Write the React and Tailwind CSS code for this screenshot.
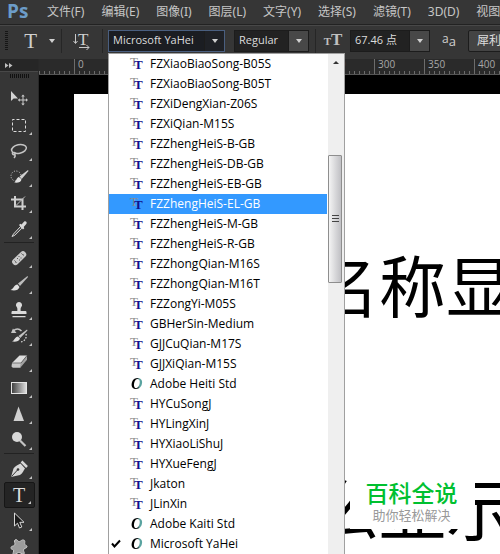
import React, { useState } from 'react';

const menus = ['文件(F)', '编辑(E)', '图像(I)', '图层(L)', '文字(Y)', '选择(S)', '滤镜(T)', '3D(D)', '视图(V)'];

const fonts = [
  { name: 'FZXiaoBiaoSong-B05S', type: 'tt' },
  { name: 'FZXiaoBiaoSong-B05T', type: 'tt' },
  { name: 'FZXiDengXian-Z06S', type: 'tt' },
  { name: 'FZXiQian-M15S', type: 'tt' },
  { name: 'FZZhengHeiS-B-GB', type: 'tt' },
  { name: 'FZZhengHeiS-DB-GB', type: 'tt' },
  { name: 'FZZhengHeiS-EB-GB', type: 'tt' },
  { name: 'FZZhengHeiS-EL-GB', type: 'tt' },
  { name: 'FZZhengHeiS-M-GB', type: 'tt' },
  { name: 'FZZhengHeiS-R-GB', type: 'tt' },
  { name: 'FZZhongQian-M16S', type: 'tt' },
  { name: 'FZZhongQian-M16T', type: 'tt' },
  { name: 'FZZongYi-M05S', type: 'tt' },
  { name: 'GBHerSin-Medium', type: 'tt' },
  { name: 'GJJCuQian-M17S', type: 'tt' },
  { name: 'GJJXiQian-M15S', type: 'tt' },
  { name: 'Adobe Heiti Std', type: 'ot' },
  { name: 'HYCuSongJ', type: 'tt' },
  { name: 'HYLingXinJ', type: 'tt' },
  { name: 'HYXiaoLiShuJ', type: 'tt' },
  { name: 'HYXueFengJ', type: 'tt' },
  { name: 'Jkaton', type: 'tt' },
  { name: 'JLinXin', type: 'tt' },
  { name: 'Adobe Kaiti Std', type: 'ot' },
  { name: 'Microsoft YaHei', type: 'ot' },
];

const toolGroups = [
  [
    {
      name: 'Move',
      single: true,
      icon: (
        <>
          <path d="M1 1v10l2.600-2.400H8z" fill="#d2d2d2" />
          <path d="M13 6v8M9 10h8" stroke="#c8c8c8" />
          <path d="M13 4.500l-1.800 2h3.600zM13 15.500l-1.800-2h3.600zM7.800 10l2-1.800v3.600zM18 10l-2-1.800v3.600z" fill="#c8c8c8" />
        </>
      ),
    },
    {
      name: 'Marquee',
      icon: <rect x="2.500" y="3.500" width="13" height="12" fill="none" stroke="#dcdcdc" strokeDasharray="3 2" strokeDashoffset="1" />,
    },
    {
      name: 'Lasso',
      icon: (
        <g fill="none" stroke="#c4c4c4" strokeWidth="1.500">
          <ellipse cx="9" cy="7" rx="7.500" ry="4.300" transform="rotate(-12 9 7)" />
          <path d="M3 10c-1.500 1.500 0 3 1.500 2.500s.5-2.500-1-2M4.500 12.500c1 1 .5 2.500-.5 3.500" />
        </g>
      ),
    },
    {
      name: 'Quick Selection',
      icon: (
        <>
          <circle cx="6" cy="8" r="5" fill="none" stroke="#d8d8d8" strokeDasharray="1 1.600" />
          <path d="M18 2l-8.500 6.500 2.200 2.400L18.500 3z" fill="#d0d0d0" />
          <path d="M9 9l2.500 2.500c-.5 3-4 3.500-7.500 3 2-.5 2.500-5 5-5.500z" fill="#e0e0e0" />
        </>
      ),
    },
    {
      name: 'Crop',
      icon: (
        <>
          <path d="M5 2v10.500h11M1 5.500h11.500V16" fill="none" stroke="#d0d0d0" strokeWidth="2" />
          <path d="M5.500 12L15 2.500" stroke="#bdbdbd" />
        </>
      ),
    },
    {
      name: 'Eyedropper',
      icon: (
        <>
          <path d="M10.500 6.500l-7 7.500-1.500 2.500 2.800-1.200 7.200-7.200z" fill="#4a4a4a" stroke="#d4d4d4" />
          <path d="M9 5l1.300-1.200 1.200.8L14 1.800c1.500-1.300 3.600.6 2.300 2.200L13.700 7l.6 1.200L13 9.500z" fill="#d8d8d8" />
        </>
      ),
    },
  ],
  [
    {
      name: 'Healing Brush',
      icon: (
        <>
          <rect x="0.500" y="6" width="17" height="6.500" rx="3.200" fill="#c9c9c9" transform="rotate(-44 9 9)" />
          <path d="M4 11l3 3M11 4l3 3" stroke="#8a8a8a" />
          <path d="M8.500 7.500h1M10.500 9h1M7 9.500h1M9 11h1M12.500 5.500h1M5 13h1" stroke="#555" />
        </>
      ),
    },
    {
      name: 'Brush',
      icon: (
        <>
          <path d="M17.500 1L8 8.500l2 2.500 8-9z" fill="#bdbdbd" />
          <path d="M7.500 9.500l2 2.500c-1 3.500-5 4-9 3 3-.7 3.500-5.500 7-5.500z" fill="#e0e0e0" />
        </>
      ),
    },
    {
      name: 'Clone Stamp',
      icon: (
        <path d="M9 1a3 3 0 0 1 2.300 5c-.8 1-.8 2.500-.6 4H15c1 0 1.500.5 1.500 1.300V13h-15v-1.700c0-.8.500-1.300 1.500-1.300h4.300c.2-1.500.2-3-.6-4A3 3 0 0 1 9 1zM2.500 15h13v1.300h-13z" fill="#dadada" />
      ),
    },
    {
      name: 'History Brush',
      icon: (
        <>
          <path d="M3 4c3-2.500 6-2.500 8.500 0" fill="none" stroke="#c4c4c4" strokeWidth="1.500" />
          <path d="M1 6l2-4.500L6.500 6z" fill="#c4c4c4" />
          <path d="M17 2.500L8.500 9l1.800 2L17.500 3.500z" fill="#c4c4c4" />
          <path d="M8 9.500l2 2c-.8 3-4.500 3.500-8 3 2.500-.7 3-5 6-5z" fill="#dedede" />
          <path d="M16 7c.8 4-1 7-5 8" fill="none" stroke="#dedede" strokeWidth="1.300" strokeDasharray="1.500 1.500" />
        </>
      ),
    },
    {
      name: 'Eraser',
      icon: (
        <>
          <path d="M2 10l7.500-7.500H17L11 10z" fill="#dedede" />
          <path d="M11 10l6-7.500v4.300L10.500 14.500z" fill="#a0a0a0" />
          <path d="M2 10h9l-.5 4.700H2.800L1.500 13.500z" fill="#c8c8c8" />
          <path d="M2 10h9l6-7.500" fill="none" stroke="#555" strokeWidth=".7" />
        </>
      ),
    },
    {
      name: 'Gradient',
      icon: (
        <>
          <defs>
            <linearGradient id="toolGradient">
              <stop offset="0" stopColor="#3c3c3c" />
              <stop offset="1" stopColor="#e0e0e0" />
            </linearGradient>
          </defs>
          <rect x="1.500" y="3.500" width="15" height="11" fill="url(#toolGradient)" stroke="#e4e4e4" />
        </>
      ),
    },
    { name: 'Sharpen', icon: <path d="M8.500 1.500L3.500 16h10.500z" fill="#d0d0d0" /> },
    {
      name: 'Dodge',
      icon: (
        <>
          <circle cx="7" cy="6" r="5" fill="#d8d8d8" />
          <path d="M10 9.500l5.500 5.500" stroke="#c4c4c4" strokeWidth="2.200" />
        </>
      ),
    },
  ],
  [
    {
      name: 'Pen',
      icon: (
        <>
          <path d="M1 17l2.500-8.500C5.500 5.500 8 5 10.500 3.500l4.500 5c-1.500 2-2 4.500-5 6.500z" fill="#d6d6d6" />
          <path d="M1.500 16.500l6-6.500" stroke="#333" />
          <circle cx="8" cy="9.500" r="1.300" fill="#333" />
          <path d="M11.500 1.500l5.500 5.500" stroke="#d6d6d6" strokeWidth="2.500" />
        </>
      ),
    },
    { name: 'Type', letter: 'T' },
    {
      name: 'Path Selection',
      icon: <path d="M4.500 1v13l3-2.800 2 4.800 2.300-1-2-4.700H14z" fill="#1c1c1c" stroke="#d8d8d8" />,
    },
    {
      name: 'Custom Shape',
      icon: (
        <path d="M8 3c2 2 3-1.500 5.500-1S14 5 15 6.500s2.500 1 2 2.500-3.500 1-3.500 3 2 3.500 0 4-3-2-5-1.500S5 17.500 3.500 16.500s1-3.500 0-4.500-3-.5-2.500-2.500 3-1 3.800-2.500S3.500 3 5 2s2 0 3 1z" fill="#9c9c9c" stroke="#c8c8c8" />
      ),
    },
  ],
];

const Caret = () => (
  <svg width="6" height="4" viewBox="0 0 6 4" aria-hidden="true">
    <path d="M0 0h6L3 4z" fill="#d0d0d0" />
  </svg>
);

const Separator = () => <span className="h-6 w-px shrink-0 bg-[#262626]" />;

const ComboBox = ({ label, value, width, active, children }) => {
  const [text, setText] = useState(value);

  return (
    <div className={`relative flex h-[22px] shrink-0 border ${width} ${active ? 'border-[#4a5f80] bg-[#1b1d22]' : 'border-[#1c1c1c] bg-[#222]'}`}>
      <input
        type="text"
        aria-label={label}
        value={text}
        onChange={(e) => setText(e.target.value)}
        className="w-0 min-w-0 flex-1 bg-transparent pl-1 font-['Open_Sans','Noto_Sans_CJK_SC',sans-serif] text-[11px] text-[#dcdcdc] outline-none"
      />
      <button
        type="button"
        aria-label={`${label} options`}
        className={`flex w-5 items-center justify-center border-l border-[#1c1c1c] ${active ? 'bg-[#1f2126]' : 'bg-[#484848]'}`}
      >
        <Caret />
      </button>
      {children}
    </div>
  );
};

const FontIcon = ({ type }) =>
  type === 'tt' ? (
    <span aria-hidden="true" className="relative h-4 w-4 shrink-0 font-['Liberation_Serif',serif] text-[13px] leading-3 font-bold">
      <span className="absolute top-0 left-0 font-normal text-[#8c8c8c]">T</span>
      <span className="absolute top-[3px] left-1 text-[#10108c]">T</span>
    </span>
  ) : (
    <span aria-hidden="true" className="h-4 w-4 shrink-0 bg-linear-to-r from-black from-40% to-[#5aa3a0] to-60% bg-clip-text pl-px font-['Liberation_Serif',serif] text-[16px] leading-4 font-bold text-transparent italic">
      O
    </span>
  );

const FontMenu = () => {
  const [hovered, setHovered] = useState('FZZhengHeiS-EL-GB');
  const selected = 'Microsoft YaHei';

  return (
    <div className="absolute top-full -left-px z-10 mt-[2px] flex w-[237px] border border-[#a0a0a0] bg-white">
      <ul role="listbox" aria-label="Fonts" className="flex-1 pr-px">
        {fonts.map((font) => (
          <li
            key={font.name}
            role="option"
            aria-selected={font.name === selected}
            onMouseEnter={() => setHovered(font.name)}
            className={`flex h-5 items-center font-['Open_Sans',sans-serif] text-[12px] whitespace-nowrap ${font.name === hovered ? 'bg-[#3399ff] text-white' : 'text-black'}`}
          >
            <span className="flex w-[21px] shrink-0 pl-[2px]">
              {font.name === selected && (
                <svg width="10" height="9" viewBox="0 0 10 9" aria-hidden="true">
                  <path d="M1 4.500l2.500 3L9 1.500" fill="none" stroke="#000" strokeWidth="2" />
                </svg>
              )}
            </span>
            <FontIcon type={font.type} />
            <span className="pl-1">{font.name}</span>
          </li>
        ))}
      </ul>
      <div aria-hidden="true" className="flex w-4 flex-col items-center bg-[#efefef]">
        <svg width="8" height="20" viewBox="0 0 8 20">
          <path d="M1 10l3-3 3 3z" fill="#333" />
        </svg>
        <div className="mt-[81px] mr-[2px] flex h-32 w-[14px] flex-col items-center justify-center gap-[2px] rounded-[1px] border border-[#8e8e8e] bg-linear-to-r from-[#f4f4f4] to-[#c0c0c4]">
          <span className="h-px w-[7px] bg-[#444]" />
          <span className="h-px w-[7px] bg-[#444]" />
          <span className="h-px w-[7px] bg-[#444]" />
        </div>
      </div>
    </div>
  );
};

const MenuBar = () => (
  <nav className="flex h-[25px] shrink-0 items-center border-b border-[#222] pl-[7px]">
    <span className="w-10 shrink-0 pb-[2px] font-['Open_Sans',sans-serif] text-[19px] leading-6 font-bold text-[#6c9cc8]">Ps</span>
    <div className="flex gap-[17px]">
      {menus.map((menu) => (
        <button key={menu} type="button" className="text-[12px] whitespace-nowrap text-[#c6c6c6]">
          {menu}
        </button>
      ))}
    </div>
  </nav>
);

const OptionsBar = () => (
  <div className="flex h-[34px] shrink-0 items-center border-t border-[#484848] pb-1 pl-[5px]">
    <svg width="3" height="20" viewBox="0 0 3 20" className="shrink-0" aria-hidden="true">
      <path d="M1.500 0v20" stroke="#161616" strokeWidth="3" strokeDasharray="1 1" />
    </svg>
    <button type="button" aria-label="Tool preset" className="flex w-[53px] shrink-0 items-center justify-end gap-3 pr-[6px] text-[#d0d0d0]">
      <span className="font-['Liberation_Serif',serif] text-[21px] leading-6">T</span>
      <Caret />
    </button>
    <Separator />
    <button type="button" aria-label="Text orientation" className="flex w-10 shrink-0 items-center justify-center text-[#d0d0d0]">
      <svg width="18" height="18" viewBox="0 0 18 18">
        <path d="M2.500 2v9M0.500 9l2 2.500 2-2.500M6 15.500h10M13.500 13l2.500 2.500-2.500 2.500" fill="none" stroke="#c8c8c8" />
        <text x="5" y="13" fill="#d0d0d0" fontFamily="Liberation Serif" fontSize="17">T</text>
      </svg>
    </button>
    <Separator />
    <div className="flex shrink-0 items-center gap-[9px] pl-[5px]">
      <ComboBox label="Font family" value="Microsoft YaHei" width="w-[117px]" active>
        <FontMenu />
      </ComboBox>
      <ComboBox label="Font style" value="Regular" width="w-[75px]" />
    </div>
    <span className="w-[6px] shrink-0" />
    <Separator />
    <span aria-hidden="true" className="flex w-[34px] shrink-0 items-baseline justify-center font-['Liberation_Serif',serif] leading-6 font-bold text-[#c0c0c0]">
      <span className="text-[11px]">T</span>
      <span className="text-[17px]">T</span>
    </span>
    <ComboBox label="Font size" value="67.46 点" width="w-[80px]" />
    <span aria-hidden="true" className="flex w-[38px] shrink-0 items-center justify-center font-['Open_Sans',sans-serif] leading-4 text-[#d0d0d0]">
      <span className="pb-1 text-[12px]">a</span>
      <span className="text-[13px]">a</span>
    </span>
    <select aria-label="Anti-aliasing" className="h-[22px] w-[80px] shrink-0 appearance-none rounded-[2px] border border-[#1c1c1c] bg-[#444] pl-2 text-[12px] text-[#dcdcdc]">
      <option>犀利</option>
    </select>
  </div>
);

const ToolPanel = () => (
  <aside className="flex w-[39px] shrink-0 flex-col border-r border-[#282828]">
    <button type="button" aria-label="Expand panel" className="flex h-[13px] shrink-0 items-center border-b border-[#484848] bg-[#262626] pl-[5px]">
      <svg width="8" height="5" viewBox="0 0 8 5">
        <path d="M0 0l3.500 2.500L0 5zM4 0l3.500 2.500L4 5z" fill="#c0c0c0" />
      </svg>
    </button>
    <svg width="20" height="4" viewBox="0 0 20 4" className="mt-[2px] mb-2 ml-[10px] shrink-0" aria-hidden="true">
      <path d="M0 2h20" stroke="#111" strokeWidth="4" strokeDasharray="1 1" />
    </svg>
    {toolGroups.map((group, i) => (
      <div key={i} className={`mx-1 flex shrink-0 flex-col items-center ${i > 0 ? 'border-t border-[#222] pt-[2px]' : ''}`}>
        {group.map((tool) => (
          <button
            key={tool.name}
            type="button"
            aria-label={tool.name}
            className={`relative flex h-[26px] w-[31px] items-center justify-center ${tool.letter ? 'rounded-[2px] border border-[#161616] bg-[#242424]' : ''}`}
          >
            {tool.letter ? (
              <span className="font-['Liberation_Serif',serif] text-[20px] leading-6 text-[#dcdcdc]">{tool.letter}</span>
            ) : (
              <svg width="18" height="18" viewBox="0 0 18 18" className="overflow-visible">
                {tool.icon}
              </svg>
            )}
            {!tool.single && (
              <svg width="3" height="3" viewBox="0 0 3 3" className="absolute right-[3px] bottom-[3px]">
                <path d="M3 0v3H0z" fill="#c4c4c4" />
              </svg>
            )}
          </button>
        ))}
      </div>
    ))}
  </aside>
);

const RULER_ORIGIN = 35;

const Ruler = () => {
  const marks = Array.from({ length: 20 }, (_, i) => i * 50);

  return (
    <svg width="100%" height="16" className="shrink-0 bg-[#2a2a2a]" aria-hidden="true">
      <defs>
        <pattern id="ticks" x="0" y="0" width="5" height="16" patternUnits="userSpaceOnUse">
          <path d="M0.500 12v4" stroke="#6c6c6c" />
        </pattern>
      </defs>
      <rect width="100%" height="16" fill="url(#ticks)" />
      {marks.map((mark) => (
        <g key={mark}>
          <path d={`M${RULER_ORIGIN + mark + 0.5} 0v16`} stroke="#6c6c6c" />
          <text x={RULER_ORIGIN + mark + 4} y="9" fill="#a8a8a8" fontSize="10" fontFamily="Open Sans">
            {mark}
          </text>
        </g>
      ))}
      <path d="M0 15.500h2000" stroke="#555" />
    </svg>
  );
};

const Canvas = () => (
  <main className="flex min-w-0 flex-1 flex-col">
    <Ruler />
    <div className="flex flex-1 bg-black pt-[19px] pl-[35px]">
      <div className="relative flex-1 overflow-hidden bg-white text-black">
        <p className="absolute top-[152px] left-[238px] text-[67px] leading-[80px] whitespace-nowrap">名称显示</p>
        <p className="absolute top-[375px] left-[238px] text-[67px] leading-[80px] whitespace-nowrap">么显示</p>
        <div className="absolute top-[376px] left-[276px] flex h-[59px] w-[125px] flex-col items-center bg-white pt-[9px] pr-[2px]">
          <span className="text-[23px] leading-7 font-medium text-[#00c030]">百科全说</span>
          <span className="text-[13px] leading-4 text-[#999]">助你轻松解决</span>
        </div>
      </div>
    </div>
  </main>
);

const App = () => {
  return (
    <div className="flex h-screen flex-col overflow-hidden bg-[#363636] font-['Noto_Sans','Noto_Sans_CJK_SC',sans-serif]">
      <MenuBar />
      <OptionsBar />
      <div className="flex min-h-0 flex-1">
        <ToolPanel />
        <Canvas />
      </div>
    </div>
  );
};

export default App;
